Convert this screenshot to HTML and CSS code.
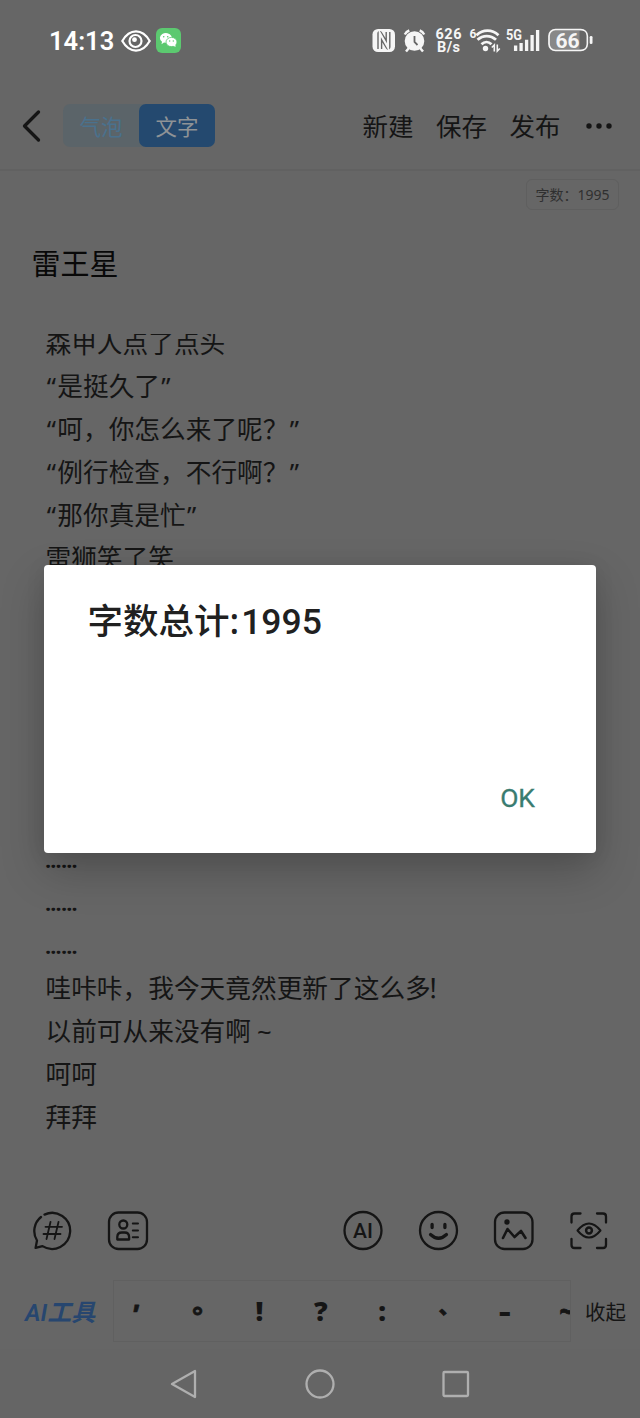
FILE: index.html
```html
<!DOCTYPE html>
<html lang="zh-CN">
<head>
<meta charset="utf-8">
<title>雷王星</title>
<link rel="stylesheet" href="styles.css">
</head>
<body>
<div class="screen">
  <div class="status">
    <span class="clock">14:13</span>
    <svg class="eye" width="30" height="22" viewBox="0 0 30 22" fill="none" stroke="#fff" stroke-width="2.2"><path d="M1.3 11C5 4.600 9.700 1.400 15 1.400S25 4.600 28.700 11C25 17.400 20.300 20.600 15 20.600S5 17.400 1.300 11Z"/><circle cx="14.500" cy="11" r="6"/><circle cx="13.500" cy="9.700" r="2.400" fill="#fff" stroke="none"/></svg>
    <svg class="wechat" width="25" height="25" viewBox="0 0 25 25"><rect width="25" height="25" rx="6" fill="#5cc970"/><g fill="#fff"><path d="M5.500 16.300 6 13.800A6 5 0 1 1 11 14.900L8 14.500Z"/><ellipse cx="15.500" cy="14" rx="5.500" ry="4.600" stroke="#5cc970" stroke-width=".8"/><path d="m17 17.500 2.500 1.500-.2-3Z"/></g><g fill="#5cc970"><circle cx="7.700" cy="8.700" r=".8"/><circle cx="11.700" cy="8.700" r=".8"/><circle cx="13.700" cy="13" r=".7"/><circle cx="17.300" cy="13" r=".7"/></g></svg>
    <svg class="signals" width="222" height="32" viewBox="371 25 222 32" fill="#f5f5f5">
      <rect x="372.500" y="29" width="22.500" height="23" rx="5.500"/>
      <path d="M379.800 49V33.500L388 47V32" fill="none" stroke="#666" stroke-width="5" stroke-linejoin="round"/><path d="M379.800 50V33L388 47.500V31" fill="none" stroke="#f5f5f5" stroke-width="2.200"/>
      <circle cx="414.500" cy="41" r="9.800"/><path d="m409 48-3 3.500m14-3.500 3 3.500" stroke="#f5f5f5" stroke-width="2.500"/><path d="M404.800 34.500a8 8 0 0 1 4.500-4M419.700 30.500a8 8 0 0 1 4.500 4" fill="none" stroke="#f5f5f5" stroke-width="2.400"/><path d="M414.500 36v6l3 3" fill="none" stroke="#666" stroke-width="1.800"/>
      <g font-family="Roboto, sans-serif" font-weight="700"><text x="435.500" y="39" font-size="14.500" textLength="26">626</text><text x="437" y="51.500" font-size="14.500" textLength="23">B/s</text><text x="469.500" y="37.500" font-size="12">6</text><text x="506" y="39.500" font-size="14.500" textLength="16" lengthAdjust="spacingAndGlyphs">5G</text></g>
      <path d="M476.500 35.200c6.500-6 15.500-6 22 0M477.500 39.800c5.500-5 13-5 18.500 0M481.500 44.200c3-2.900 7-2.900 10 0" fill="none" stroke="#f5f5f5" stroke-width="2.800"/><circle cx="485.500" cy="48.500" r="2.700"/>
      <path d="M491.800 47.500 494.300 45V51.500M497.300 44.500V51L499.800 48.500" fill="none" stroke="#f5f5f5" stroke-width="1.600"/>
      <path d="M516 45.500v5.500M521.500 43v8M527 39.700V51M532.500 35V51M538 30V51" transform="translate(-.4)" stroke="#f5f5f5" stroke-width="3.300"/>
      <rect x="549" y="29.500" width="38.300" height="21" rx="6.500" fill="#888" stroke="#f5f5f5" stroke-width="1.700"/><path d="M579.500 31h2.800q4 0 4 5v8q0 5-4 5h-2.800Z" fill="#666"/><rect x="589.700" y="36" width="2.800" height="8" rx="1.300"/>
      <text x="555.500" y="47.500" font-size="21" font-family="Roboto, sans-serif" font-weight="700">66</text>
    </svg>
  </div>

  <header class="header">
    <svg class="back" width="20" height="34" viewBox="0 0 20 34" fill="none" stroke="#151515" stroke-width="3.300" stroke-linecap="round" stroke-linejoin="round"><path d="M16.500 3 2.500 17l14 14"/></svg>
    <div class="tabs"><span class="tab">气泡</span><span class="tab active">文字</span></div>
    <nav class="actions"><span>新建</span><span>保存</span><span>发布</span></nav>
    <svg class="more" width="26" height="8" fill="#151515"><circle cx="3" cy="4" r="2.700"/><circle cx="13" cy="4" r="2.700"/><circle cx="23" cy="4" r="2.700"/></svg>
  </header>

  <main class="editor">
    <div class="count">字数：1995</div>
    <h1 class="title">雷王星</h1>
    <div class="content">
      <p>森甲人点了点头</p>
      <p><q>“</q>是挺久了<q>”</q></p>
      <p><q>“</q>呵，你怎么来了呢？<q>”</q></p>
      <p><q>“</q>例行检查，不行啊？<q>”</q></p>
      <p><q>“</q>那你真是忙<q>”</q></p>
      <p>雷狮笑了笑</p>
      <p></p><p></p><p></p><p></p><p></p><p></p>
      <p class="dots">……</p>
      <p class="dots">……</p>
      <p class="dots">……</p>
      <p>哇咔咔，我今天竟然更新了这么多<span class="bang">！</span></p>
      <p>以前可从来没有啊<span class="wave">~</span></p>
      <p>呵呵</p>
      <p>拜拜</p>
    </div>
  </main>

  <div class="tools">
    <svg width="42" height="42" viewBox="0 0 42 42"><path d="M12.500 4.600A18 18 0 1 1 10.500 36.100L3.600 37.900 5 30.500A18 18 0 0 1 9 7"/><path d="m18.500 12-4 17m12-17-4 17M13.500 16.800H30M11.500 24h17" stroke-width="1.800"/></svg>
    <svg width="42" height="42" viewBox="0 0 42 42"><rect x="2" y="2.500" width="38" height="36.500" rx="9.500"/><circle cx="16.300" cy="14.500" r="4"/><path d="M10.300 29.500v-2.500c0-3 1.700-4.500 4.500-4.500h2.800c2.800 0 4.500 1.500 4.500 4.500v2.500Z"/><path d="M25.800 13.500h5.200M25.800 20.500h5.200M25.800 27.300h5.200" stroke-width="2"/></svg>
    <span class="spacer"></span>
    <svg width="42" height="42" viewBox="0 0 42 42"><circle cx="21" cy="20.500" r="18.500"/><text x="11" y="28" font-family="Roboto, sans-serif" font-size="21" font-weight="500" fill="#151515" stroke="none">AI</text></svg>
    <svg width="42" height="42" viewBox="0 0 42 42"><circle cx="21.500" cy="20.500" r="18.500"/><path d="M15.100 14.500v3M27.900 14.500v3" stroke-width="3.300"/><path d="M13.500 24.500q8 7.500 16 0" stroke-width="3.200"/></svg>
    <svg width="42" height="42" viewBox="0 0 42 42"><rect x="2" y="2.500" width="37.500" height="36.500" rx="9.500"/><circle cx="14" cy="12" r="2.700" fill="#151515" stroke="none"/><path d="m10 28 4.500-9 7 8 6.500-6 4.500 7" stroke-width="2.600"/></svg>
    <svg width="42" height="42" viewBox="0 0 42 42"><path d="M3.500 12.500V6.500Q3.500 3.500 6.500 3.500h6M29 3.500h6q3 0 3 3v6M3.500 29v6q0 3 3 3h6M29 38h6q3 0 3-3v-6"/><path d="M9.500 20.500q11.500-14 23 0-11.500 14-23 0Z" stroke-width="2"/><circle cx="21" cy="20.500" r="2.900" stroke-width="2.500"/></svg>
  </div>

  <div class="symbols">
    <span class="ai">AI工具</span>
    <div class="strip"><div class="keys"><span class="comma">,</span><span class="ring">。</span><span>!</span><span>?</span><span>:</span><span class="pause">、</span><span class="dash">-</span><span class="tilde">~</span></div></div>
    <span class="fold">收起</span>
  </div>

  <div class="navbar">
    <svg width="30" height="32" viewBox="0 0 30 32"><path d="M26 3v26L3 16Z"/></svg>
    <svg width="30" height="32" viewBox="0 0 30 32"><circle cx="15" cy="16" r="13.500"/></svg>
    <svg width="30" height="32" viewBox="0 0 30 32"><rect x="2.500" y="4" width="24.500" height="24" rx="1"/></svg>
  </div>

  <section class="dialog" role="dialog">
    <h2>字数总计:<span>1995</span></h2>
    <button>OK</button>
  </section>
</div>
</body>
</html>
```
FILE: styles.css
```css
* { box-sizing: border-box; }
body { margin: 0; background: #666; color: #151515; font-family: "Noto Sans", "Noto Sans CJK SC", sans-serif; }
h1, h2, p { margin: 0; font-weight: 400; }
svg { display: block; flex: none; }
.screen { position: relative; width: 640px; height: 1418px; overflow: hidden; display: flex; flex-direction: column; }

.status { height: 81px; display: flex; align-items: center; padding-left: 49px; flex: none; }
.clock { width: 72px; color: #fff; font-family: Roboto, sans-serif; font-size: 25.500px; font-weight: 600; line-height: 30px; }
.wechat { margin-left: 5px; }
.signals { margin-left: 190px; }

.header { height: 90px; flex: none; display: flex; align-items: center; padding: 0 0 0 22px; border-bottom: 2px solid #616161; }
.back { margin-top: 1px; }
.tabs { display: flex; width: 152px; height: 43px; margin-left: 21px; border-radius: 7px; background: #5b6469; }
.tab { width: 76px; line-height: 43px; text-align: center; font-size: 21.500px; color: #4a718d; font-family: "Noto Sans CJK SC", sans-serif; }
.tab.active { background: #24496f; color: #8f9396; border-radius: 7px; }
.actions { display: flex; gap: 22.500px; margin: 2px 0 0 147.500px; font-size: 25.500px; line-height: 40px; }
.more { margin: 1px 0 0 25px; }

.editor { height: 1019px; flex: none; display: flex; flex-direction: column; }
.count { align-self: flex-end; margin: 8px 21px 0 0; width: 93px; height: 31px; border: 1.500px solid #5f5f5f; border-radius: 6px; text-align: center; font-size: 14px; line-height: 29px; color: #303030; white-space: nowrap; }
.title { margin: 31px 0 0 31.500px; font-size: 29px; line-height: 46px; color: #080808; }
.content { margin: 47px 0 0 45px; height: 806px; overflow: hidden; font-size: 25.700px; line-height: 43px; white-space: nowrap; }
.content p { height: 43px; padding-left: .5px; }
.content p:first-child { margin-top: -12.500px; }
.content q { quotes: none; display: inline-block; width: 11.800px; text-align: center; }
.content q::before, .content q::after { content: none; }
.content .dots { font-weight: 900; font-size: 18px; line-height: 47px; letter-spacing: .5px; }
.wave { margin-left: 6px; }
.bang { margin-left: -4px; }

.tools { height: 82px; flex: none; display: flex; align-items: center; padding: 0 30px 0 32px; gap: 33.300px; }
.tools svg { fill: none; stroke: #151515; stroke-width: 2.300; stroke-linecap: round; stroke-linejoin: round; }
.spacer { flex: 1; }

.symbols { height: 77px; flex: none; display: flex; align-items: center; padding-left: 25px; }
.ai { width: 88px; color: #27466f; font-family: Roboto, "Noto Sans CJK SC", sans-serif; font-size: 24px; font-weight: 600; font-style: italic; white-space: nowrap; }
.strip { width: 458px; height: 62px; overflow: hidden; border: 1px solid #606060; }
.keys { display: flex; margin-left: -8px; font-size: 27px; font-weight: 900; line-height: 59px; height: 59px; }
.keys span { width: 61.400px; flex: none; text-align: center; }
.keys .comma { line-height: 37px; font-size: 24px; -webkit-text-stroke: .6px #151515; }
.keys .ring { line-height: 44px; padding-left: 15px; font-size: 26px; -webkit-text-stroke: .8px #151515; }
.keys .pause { line-height: 52px; padding-left: 10px; font-size: 20px; -webkit-text-stroke: .8px #151515; }
.keys .dash { transform: scaleX(1.35); }
.keys .tilde { font-size: 24px; -webkit-text-stroke: .8px #151515; }
.fold { margin-left: 14px; font-size: 20.500px; }

.navbar { height: 69px; flex: none; display: flex; justify-content: center; align-items: center; gap: 106px; padding-right: 1px; background: #656565; }
.navbar svg { fill: none; stroke: #afafaf; stroke-width: 2.300; stroke-linejoin: round; }

.dialog { position: absolute; left: 44px; top: 565px; width: 552px; height: 288px; display: flex; flex-direction: column; justify-content: space-between; padding: 30px 61px 35px 43.500px; background: #fff; border-radius: 4px; box-shadow: 0 18px 44px rgba(0,0,0,.22), 0 2px 20px rgba(0,0,0,.08); }
.dialog h2 { font-size: 35.500px; font-weight: 500; line-height: 51px; color: #202020; }
.dialog h2 span { font-family: Roboto, sans-serif; font-size: 35.500px; margin-left: 2px; }
.dialog button { align-self: flex-end; border: 0; padding: 0; background: none; color: #3a7c70; font: 400 26.500px/40px Roboto, sans-serif; -webkit-text-stroke: .3px #3a7c70; }
```
